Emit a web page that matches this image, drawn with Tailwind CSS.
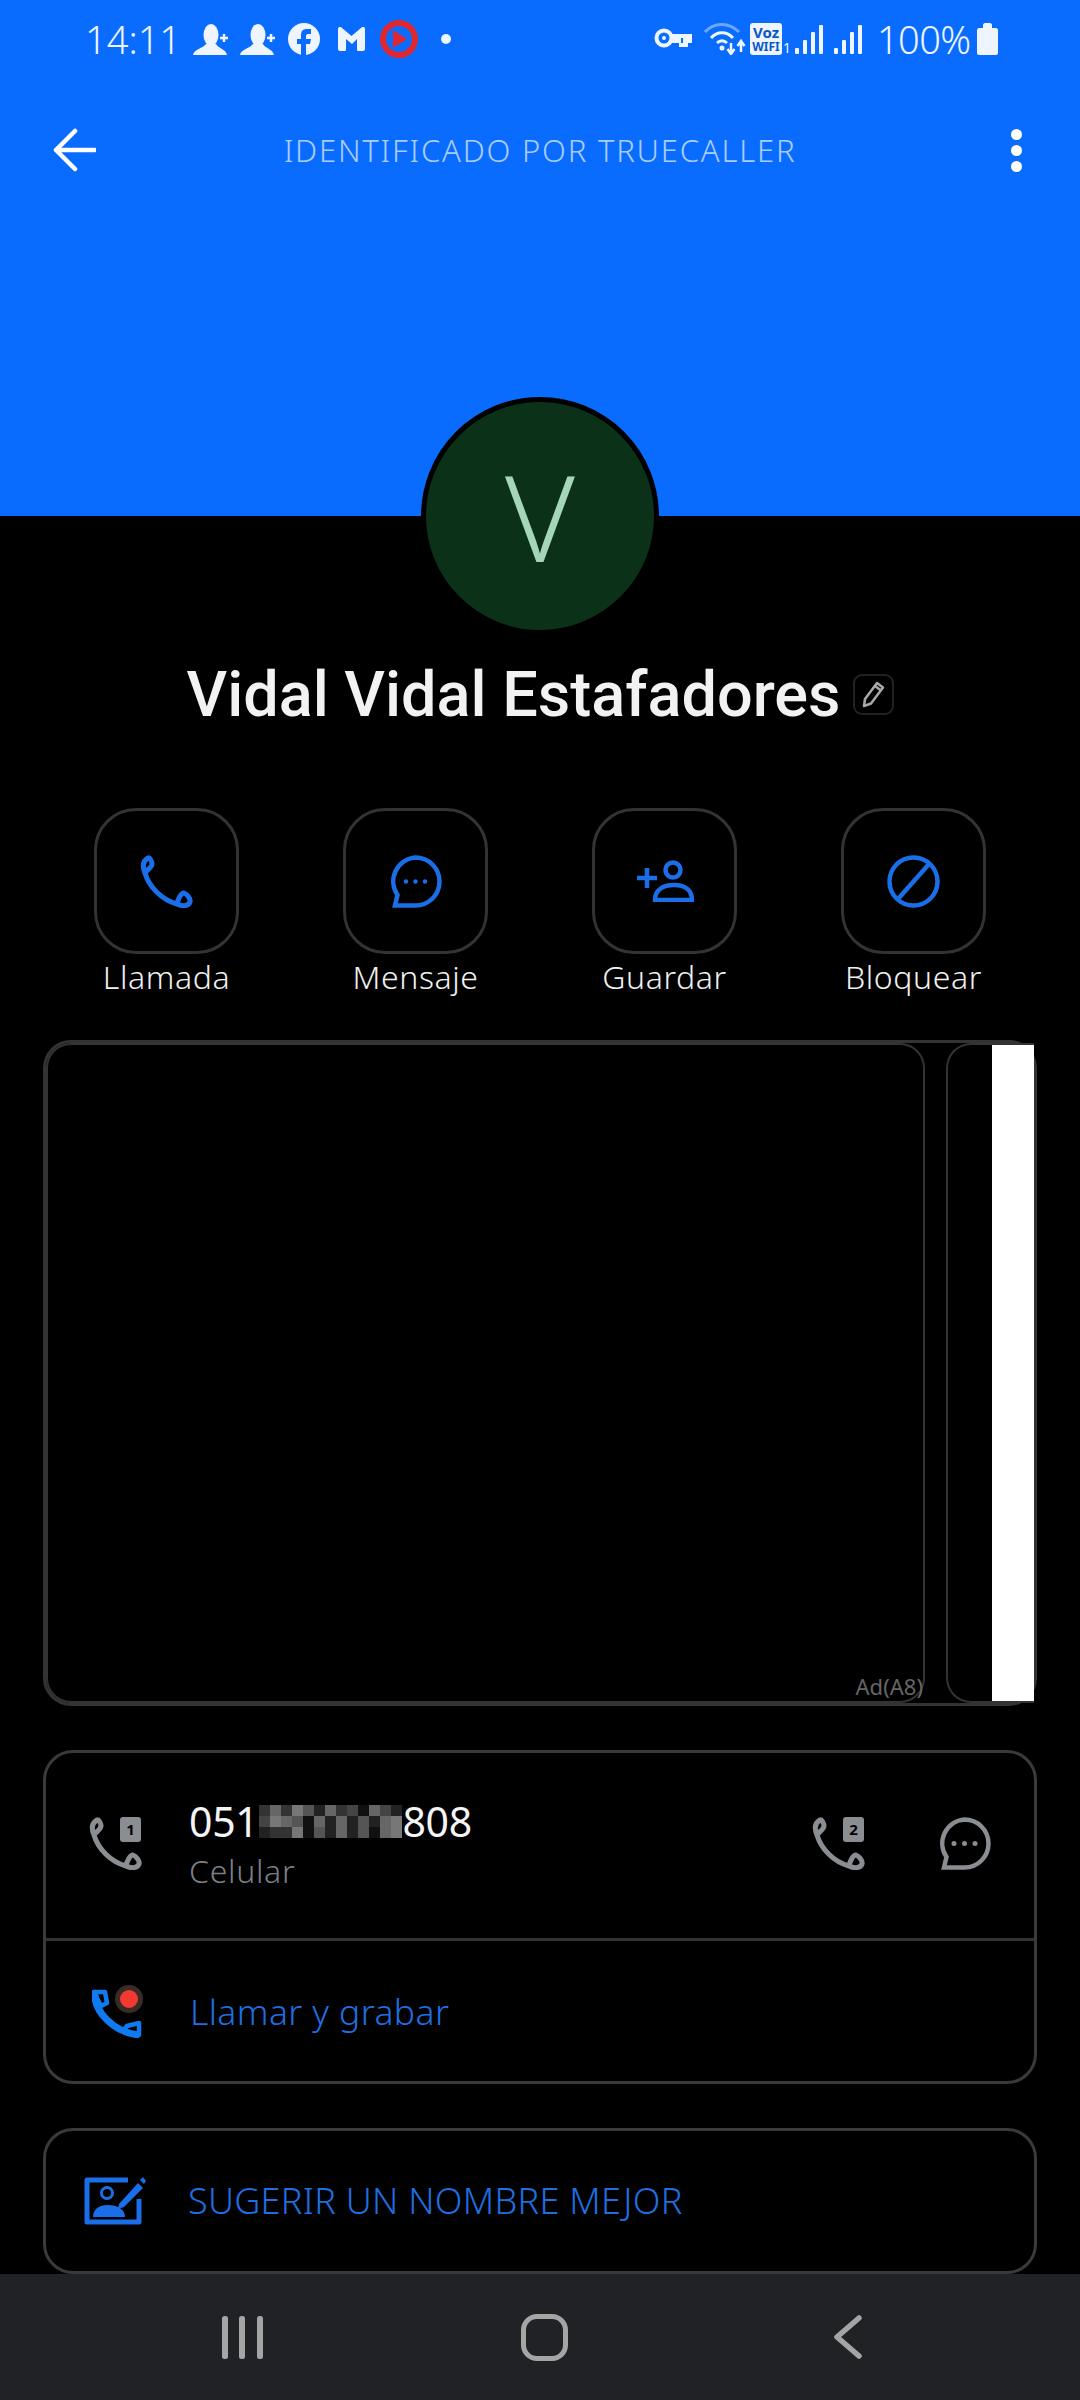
<!DOCTYPE html>
<html lang="es">
<head>
<meta charset="UTF-8">
<meta name="viewport" content="width=device-width, initial-scale=1.0">
<title>Truecaller</title>
<script src="https://cdn.jsdelivr.net/npm/@tailwindcss/browser@4"></script>
</head>
<body class="bg-black">
<svg class="hidden">
  <symbol id="handset" viewBox="0 0 53 53">
    <path d="M8 3C3 6 2 11 5 18C8 14 12 12 12 9C12 7 10 2 8 3ZM5 18C9 32 22 45 37 49M37 49C41 51 48 52 50 47C51 44 47 39 44 38C41 38 38 44 37 49Z" fill="none" stroke="currentColor" stroke-width="5" stroke-linejoin="round" stroke-linecap="round"/>
  </symbol>
  <symbol id="person-add" viewBox="0 0 36 31">
    <ellipse cx="19" cy="11" rx="7.5" ry="11" fill="#eef5ff"/>
    <path d="M1 31C2 25 10 25 14 20H24C27 25 34 25 35 31Z" fill="#eef5ff"/>
    <path d="M28 14H36M32 10V18" stroke="#eef5ff" stroke-width="2.5"/>
  </symbol>
  <symbol id="signal" viewBox="0 0 28 29">
    <rect x="0" y="23" width="4" height="6" rx="1" fill="#eef5ff"/>
    <rect x="8" y="15" width="4" height="14" rx="1" fill="#eef5ff"/>
    <rect x="16" y="7" width="4" height="22" rx="1" fill="#eef5ff"/>
    <rect x="24" y="0" width="4" height="29" rx="1" fill="#eef5ff"/>
  </symbol>
</svg>

<div class="w-[1080px] h-[2400px] overflow-hidden flex flex-col bg-black font-['Noto_Sans',sans-serif]">
  <!-- header -->
  <header class="h-[516px] shrink-0 bg-[#0a6cff]">
    <div class="h-[78px] flex items-center pl-[85px] text-[#eef5ff]">
      <span class="text-[38px] leading-none font-light w-[107px]">14:11</span>
      <svg class="w-[36px] h-[31px]"><use href="#person-add"/></svg>
      <svg class="w-[36px] h-[31px] ml-[11px]"><use href="#person-add"/></svg>
      <svg class="w-[32px] h-[32px] ml-[13px]" viewBox="0 0 32 32"><circle cx="16" cy="16" r="16" fill="#eef5ff"/><path d="M13 32V21H9V16H13V12C13 8 15 6 19 6H23V11H20C18.500 11 18 12 18 13V16H23L22 21H18V32Z" fill="#0a6cff"/></svg>
      <svg class="w-[27px] h-[24px] ml-[18px]" viewBox="0 0 27 24"><path d="M0 2C0 0 2 -1 4 1L13.500 9L23 1C25 -1 27 0 27 2V22C27 23 26 24 25 24H20C19 24 19 23 19 22V12L14 17L8 12V22C8 23 8 24 7 24H2C1 24 0 23 0 22Z" fill="#eef5ff"/></svg>
      <svg class="w-[38px] h-[38px] ml-[15px]" viewBox="0 0 38 38"><circle cx="19" cy="19" r="16" fill="none" stroke="#e0262f" stroke-width="6"/><path d="M13 10L27 19L13 28Z" fill="#e0262f"/></svg>
      <span class="w-[10px] h-[10px] rounded-full bg-[#eef5ff] ml-[23px]"></span>

      <svg class="w-[38px] h-[22px] ml-[203px]" viewBox="0 0 38 22"><circle cx="10" cy="10" r="7.500" fill="none" stroke="#eef5ff" stroke-width="4"/><circle cx="10" cy="10" r="2" fill="#eef5ff"/><path d="M17 6H38V15H34V19H25V15H17Z" fill="#eef5ff"/><path d="M28 10V15" stroke="#0a6cff" stroke-width="2"/></svg>
      <svg class="w-[42px] h-[32px] ml-[12px]" viewBox="0 0 42 32"><path d="M1 9C10 -1 25 -1 35 9" fill="none" stroke="#6ba8ff" stroke-width="3"/><path d="M7 15C13 8 23 8 29 15" fill="none" stroke="#eef5ff" stroke-width="3"/><path d="M13 20C16 17 20 17 23 20" fill="none" stroke="#eef5ff" stroke-width="3"/><circle cx="18" cy="25" r="2.500" fill="#eef5ff"/><path d="M27 20V29M23.500 26L27 31L30.500 26M37 29V20M33.500 23L37 18L40.500 23" fill="none" stroke="#eef5ff" stroke-width="2.500"/></svg>
      <span class="w-[32px] h-[32px] ml-[4px] rounded-[3px] bg-[#eef5ff] text-[#0a57c8] font-bold text-center flex flex-col justify-center">
        <span class="text-[15px] leading-[15px]">Voz</span>
        <span class="text-[12px] leading-[13px]">WIFI</span>
      </span>
      <span class="text-[14px] leading-none self-end mb-[23px] w-[13px] pl-[1px]">1</span>
      <svg class="w-[28px] h-[29px]"><use href="#signal"/></svg>
      <svg class="w-[28px] h-[29px] ml-[11px]"><use href="#signal"/></svg>
      <span class="text-[38px] leading-none font-light ml-[15px] w-[100px] tracking-[-0.6px]">100%</span>
      <svg class="w-[21px] h-[32px]" viewBox="0 0 21 32"><path d="M6 2C6 1 7 0 8 0H13C14 0 15 1 15 2V5H19C20 5 21 6 21 7V30C21 31 20 32 19 32H2C1 32 0 31 0 30V7C0 6 1 5 2 5H6Z" fill="#eef5ff"/></svg>
    </div>
    <div class="h-[144px] grid grid-cols-[1fr_auto_1fr] items-center">
      <svg class="w-[44px] h-[44px] ml-[52px]" viewBox="0 0 44 44"><path d="M43 22H4M23 3L4 22L23 41" fill="none" stroke="#fff" stroke-width="4.500" stroke-linecap="round" stroke-linejoin="round"/></svg>
      <span class="text-[31px] leading-none text-[#a9cdfb] tracking-[1.8px] font-light">IDENTIFICADO POR TRUECALLER</span>
      <span class="justify-self-end mr-[58px] flex flex-col gap-[5px]">
        <span class="w-[11px] h-[11px] rounded-full bg-white"></span>
        <span class="w-[11px] h-[11px] rounded-full bg-white"></span>
        <span class="w-[11px] h-[11px] rounded-full bg-white"></span>
      </span>
    </div>
  </header>

  <!-- avatar -->
  <div class="relative w-[238px] h-[238px] -mt-[119px] self-center shrink-0 rounded-full border-[5px] border-black bg-[#0b3219] flex items-center justify-center">
    <span class="text-[120px] leading-none font-light text-[#a5d6bc]">V</span>
  </div>

  <!-- name -->
  <div class="mt-[19px] h-[80px] flex items-center justify-center gap-[12px] shrink-0">
    <h1 class="text-[63px] leading-none font-['Roboto',sans-serif] font-medium text-[#f2f2f2]">Vidal Vidal Estafadores</h1>
    <span class="w-[41px] h-[41px] rounded-[9px] border-2 border-[#222] flex items-center justify-center">
      <svg class="w-[26px] h-[28px]" viewBox="0 0 26 28"><path d="M5 19L17 3L23 7.500L11 23.500L4 26Z" fill="none" stroke="#a8a8a8" stroke-width="2.500" stroke-linejoin="round"/><path d="M15 6L21 10.500" stroke="#a8a8a8" stroke-width="2.500"/></svg>
    </span>
  </div>

  <!-- actions -->
  <div class="mt-[74px] px-[94px] flex justify-between shrink-0">
    <div class="w-[145px] flex flex-col items-center">
      <div class="w-[145px] h-[146px] rounded-[42px] border-[3px] border-[#333] flex items-center justify-center text-[#1a6fe8]">
        <svg class="w-[53px] h-[53px]"><use href="#handset"/></svg>
      </div>
      <span class="mt-[3px] text-[32px] leading-[40px] text-[#f0f0f0] font-light tracking-[0.6px]">Llamada</span>
    </div>
    <div class="w-[145px] flex flex-col items-center">
      <div class="w-[145px] h-[146px] rounded-[42px] border-[3px] border-[#333] flex items-center justify-center">
        <svg class="w-[53px] h-[53px]" viewBox="0 0 53 53"><path d="M26.500 2.500a24 24 0 0 1 0 48H6l2.500-10.500A24 24 0 0 1 26.500 2.500Z" fill="none" stroke="#1a6fe8" stroke-width="4.500"/><circle cx="17" cy="26.500" r="2.200" fill="#1a6fe8"/><circle cx="26.500" cy="26.500" r="2.200" fill="#1a6fe8"/><circle cx="36" cy="26.500" r="2.200" fill="#1a6fe8"/></svg>
      </div>
      <span class="mt-[3px] text-[32px] leading-[40px] text-[#f0f0f0] font-light tracking-[0.6px]">Mensaje</span>
    </div>
    <div class="w-[145px] flex flex-col items-center">
      <div class="w-[145px] h-[146px] rounded-[42px] border-[3px] border-[#333] flex items-center justify-center">
        <svg class="w-[58px] h-[42px]" viewBox="0 0 58 42"><path d="M1 18H21M11 8V28" stroke="#1a6fe8" stroke-width="4.500"/><circle cx="37" cy="10" r="7.500" fill="none" stroke="#1a6fe8" stroke-width="4.500"/><path d="M19 40C19 30 27 25 38 25C49 25 56 30 56 40Z" fill="none" stroke="#1a6fe8" stroke-width="4.500"/></svg>
      </div>
      <span class="mt-[3px] text-[32px] leading-[40px] text-[#f0f0f0] font-light tracking-[0.6px]">Guardar</span>
    </div>
    <div class="w-[145px] flex flex-col items-center">
      <div class="w-[145px] h-[146px] rounded-[42px] border-[3px] border-[#333] flex items-center justify-center">
        <svg class="w-[53px] h-[53px]" viewBox="0 0 53 53"><circle cx="26.500" cy="26.500" r="24" fill="none" stroke="#1a6fe8" stroke-width="4.500"/><path d="M42 9L11 44" stroke="#1a6fe8" stroke-width="4.500"/></svg>
      </div>
      <span class="mt-[3px] text-[32px] leading-[40px] text-[#f0f0f0] font-light tracking-[0.6px]">Bloquear</span>
    </div>
  </div>

  <!-- ad carousel -->
  <div class="mt-[43px] mx-[43px] h-[666px] shrink-0 rounded-[28px] border-[3px] border-[#333] flex">
    <div class="w-[879px] rounded-[25px] border-2 border-[#333] flex items-end justify-end">
      <span class="text-[22px] leading-[26px] text-[#666] pb-[2px]">Ad(A8)</span>
    </div>
    <div class="ml-[21px] w-[88px] rounded-l-[25px] border-2 border-r-0 border-[#333] flex justify-end">
      <div class="w-[42px] bg-white"></div>
    </div>
  </div>

  <!-- number card -->
  <section class="mt-[44px] mx-[43px] shrink-0 rounded-[30px] border-[3px] border-[#3a3a3a]">
    <div class="h-[185px] flex items-center pl-[43px] pr-[43px] pb-[4px] text-[#8a8d92]">
      <span class="relative w-[53px] h-[53px]">
        <svg class="w-[53px] h-[53px]"><use href="#handset"/></svg>
        <span class="absolute top-0 right-[1px] w-[21px] h-[25px] rounded-[3px] bg-[#8a8d92] text-black text-[15px] leading-[25px] font-bold text-center">1</span>
      </span>
      <div class="ml-[47px] mt-[5px] flex flex-col">
        <div class="h-[50px] flex items-center text-[41px] leading-none text-[#f4f4f4] tracking-[-0.3px]">
          <span>051</span>
          <div class="ml-[1px] w-[143px] grid grid-cols-[repeat(13,11px)] grid-rows-[repeat(3,11px)]">
            <i class="bg-[#333]"></i><i class="bg-[#666]"></i><i class="bg-[#333]"></i><i class="bg-[#777]"></i><i class="bg-[#555]"></i><i class="bg-[#222]"></i><i class="bg-[#666]"></i><i class="bg-[#333]"></i><i class="bg-[#444]"></i><i class="bg-[#111]"></i><i class="bg-[#666]"></i><i class="bg-[#444]"></i><i class="bg-[#222]"></i>
            <i class="bg-[#444]"></i><i class="bg-[#777]"></i><i class="bg-[#666]"></i><i class="bg-[#555]"></i><i class="bg-[#111]"></i><i class="bg-[#666]"></i><i class="bg-[#222]"></i><i class="bg-[#666]"></i><i class="bg-[#222]"></i><i class="bg-[#555]"></i><i class="bg-[#222]"></i><i class="bg-[#666]"></i><i class="bg-[#777]"></i>
            <i class="bg-[#222]"></i><i class="bg-[#333]"></i><i class="bg-[#333]"></i><i class="bg-[#777]"></i><i class="bg-[#111]"></i><i class="bg-[#555]"></i><i class="bg-[#222]"></i><i class="bg-[#666]"></i><i class="bg-[#222]"></i><i class="bg-[#555]"></i><i class="bg-[#111]"></i><i class="bg-[#666]"></i><i class="bg-[#777]"></i>
          </div>
          <span>808</span>
        </div>
        <span class="h-[50px] text-[32px] leading-[50px] text-[#7c7f84] font-light tracking-[0.7px]">Celular</span>
      </div>
      <span class="relative w-[53px] h-[53px] ml-auto">
        <svg class="w-[53px] h-[53px]"><use href="#handset"/></svg>
        <span class="absolute top-0 right-[1px] w-[21px] h-[25px] rounded-[3px] bg-[#8a8d92] text-black text-[15px] leading-[25px] font-bold text-center">2</span>
      </span>
      <svg class="w-[53px] h-[53px] ml-[73px]" viewBox="0 0 53 53"><path d="M26.500 2.500a24 24 0 0 1 0 48H6l2.500-10.500A24 24 0 0 1 26.500 2.500Z" fill="none" stroke="#8a8d92" stroke-width="4.500"/><circle cx="16" cy="26.500" r="2.500" fill="#8a8d92"/><circle cx="26.500" cy="26.500" r="2.500" fill="#8a8d92"/><circle cx="37" cy="26.500" r="2.500" fill="#8a8d92"/></svg>
    </div>
    <div class="border-t-[3px] border-[#333] h-[143px] flex items-center pl-[46px] pt-[1px]">
      <span class="relative w-[50px] h-[52px] text-[#0f7bf0]">
        <svg class="w-[50px] h-[52px]" viewBox="0 0 50 52"><path d="M3 8C2 24 20 46 47 49" fill="none" stroke="#0f7bf0" stroke-width="7"/><path d="M2 6H13L15 17L9 20Z M47 49V37L35 40L31 45Z" fill="none" stroke="#0f7bf0" stroke-width="4.500" stroke-linejoin="round"/></svg>
        <span class="absolute -top-[1px] -right-[1px] w-[28px] h-[28px] rounded-full border-[5px] border-[#3a2a28] bg-[#f23b30]"></span>
      </span>
      <span class="ml-[48px] text-[35.500px] leading-none text-[#1f6fe0] font-light tracking-[0.4px]">Llamar y grabar</span>
    </div>
  </section>

  <!-- suggest name -->
  <section class="mt-[44px] mx-[43px] h-[146px] shrink-0 rounded-[30px] border-[3px] border-[#3a3a3a] flex items-center pl-[38px]">
    <svg class="w-[62px] h-[48px]" viewBox="0 0 62 48"><path d="M44 3H3V45H55V22" fill="none" stroke="#1a6fe8" stroke-width="5" stroke-linejoin="round"/><circle cx="23" cy="16" r="5.500" fill="none" stroke="#1a6fe8" stroke-width="3"/><path d="M9 40C9 32 15 28 24 28C33 28 41 32 41 40Z" fill="#1a6fe8"/><path d="M35 27L54 6L59 11L40 30L34 32Z" fill="#1a6fe8"/><path d="M56 3L59 0L62 4L60 7Z" fill="#1a6fe8"/></svg>
    <span class="ml-[42px] text-[36px] leading-none text-[#1f6fe0] font-light tracking-[0.3px]">SUGERIR UN NOMBRE MEJOR</span>
  </section>

  <!-- nav bar -->
  <nav class="mt-auto h-[126px] bg-[#212226] flex items-center pl-[222px]">
    <svg class="w-[41px] h-[43px]" viewBox="0 0 41 43"><rect x="0" y="0" width="6" height="43" rx="2.500" fill="#a5a5a5"/><rect x="17" y="0" width="6" height="43" rx="2.500" fill="#a5a5a5"/><rect x="35" y="0" width="6" height="43" rx="2.500" fill="#a5a5a5"/></svg>
    <span class="ml-[258px] w-[47px] h-[47px] rounded-[16px] border-[5px] border-[#a5a5a5]"></span>
    <svg class="ml-[266px] w-[28px] h-[44px]" viewBox="0 0 28 44"><path d="M25 3L3 22L25 41" fill="none" stroke="#a5a5a5" stroke-width="5.500" stroke-linecap="round" stroke-linejoin="round"/></svg>
  </nav>
</div>
</body>
</html>
